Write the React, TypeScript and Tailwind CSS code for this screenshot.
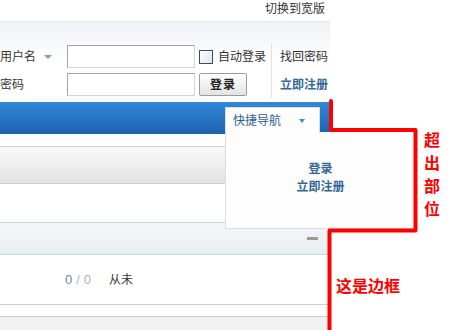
const font = "font-['Liberation_Sans','Noto_Sans_CJK_SC',sans-serif]";

function TopBar() {
  return (
    <div className="flex h-[22px] justify-end border-b border-[#e3e8ed] pr-[5px] leading-[19px]">
      切换到宽版
    </div>
  );
}

function LoginForm() {
  const input =
    "h-[23px] w-[128px] border border-[#d4d4d4] border-t-[#a3a3a3] border-l-[#a3a3a3] bg-white";
  return (
    <div className="flex h-[80px] bg-gradient-to-b from-[#eef2f6] via-white to-white pt-[23px]">
      <div className="grid grid-cols-[67px_128px_auto] grid-rows-[23px_23px] gap-y-[5px]">
        <div className="flex items-center gap-[8px]">
          <span>用户名</span>
          <span className="mt-[1px] h-0 w-0 border-x-[4px] border-t-[4px] border-x-transparent border-t-[#999]" />
        </div>
        <div className={input} />
        <label className="flex items-center pl-[4px] pr-[5px]">
          <span className="h-[14px] w-[14px] border border-[#2a4f78] bg-gradient-to-br from-white to-[#e4e4e4]" />
          <span className="ml-[5px]">自动登录</span>
        </label>
        <div className="flex items-center">密码</div>
        <div className={input} />
        <div className="pl-[4px]">
          <button
            type="button"
            className="h-[23px] w-[48px] rounded-[2px] border border-[#9c9c9c] bg-gradient-to-b from-white to-[#e3e3e3] text-[12px] font-bold tracking-[1px] text-[#222]"
          >
            登录
          </button>
        </div>
      </div>
      <div className="-mt-[2px] h-[55px] border-l border-[#e1e1e1]" />
      <div className="grid grid-rows-[23px_23px] gap-y-[5px] pl-[8px]">
        <div className="flex items-center pt-[1px]">找回密码</div>
        <div className="flex items-center font-bold text-[#336699]">立即注册</div>
      </div>
    </div>
  );
}

function QuickNav() {
  return (
    <>
      <div className="absolute left-[225px] top-[132px] flex h-[97px] w-[190px] flex-col items-center border-b border-l border-[#dcdcdc] bg-[#fdfdfd] pt-[28px] font-bold leading-[18px] text-[#336699]">
        <span>登录</span>
        <span>立即注册</span>
      </div>
      <div className="absolute left-[225px] top-[107px] flex h-[26px] w-[95px] items-center border-x border-t border-[#dcdcdc] bg-[#fdfdfd] pl-[7px] text-[#2f5f91]">
        <span>快捷导航</span>
        <span className="ml-[18px] mt-[1px] h-0 w-0 border-x-[3px] border-t-[4px] border-x-transparent border-t-[#3b8ee0]" />
      </div>
    </>
  );
}

function Annotations() {
  return (
    <>
      <svg className="pointer-events-none absolute inset-0" width="465" height="330" viewBox="0 0 465 330">
        <polyline
          points="331,101 331,130 415.5,130 415.5,230.5 329.5,230.5 329.5,332"
          fill="none"
          stroke="#ff0000"
          strokeWidth="4"
          strokeLinecap="round"
          strokeLinejoin="round"
        />
      </svg>
      <div className="absolute left-[424px] top-[129px] flex w-[16px] flex-col text-[16px] font-bold leading-[23px] text-[#ff0000]">
        <span>超</span>
        <span>出</span>
        <span>部</span>
        <span>位</span>
      </div>
      <div className="absolute left-[336px] top-[277px] text-[16px] font-bold leading-[20px] text-[#ff0000]">
        这是边框
      </div>
    </>
  );
}

export default function App() {
  return (
    <div className={`relative h-[330px] w-[465px] overflow-hidden bg-white text-[12px] text-[#333] ${font}`}>
      <div className="flex w-[330px] flex-col">
        <TopBar />
        <LoginForm />
        <div className="h-[32px] bg-gradient-to-b from-[#3189d8] to-[#1e62b0]" />
        <div className="h-[12px]" />
        <div className="h-[38px] border-y border-[#cccccc] bg-gradient-to-b from-[#f9f9f9] to-[#e3e3e3]" />
        <div className="h-[38px]" />
        <div className="flex h-[33px] items-center justify-end border-y border-[#c2d5e3] bg-gradient-to-b from-[#f4f7f9] to-[#e7edf1] pr-[12px]">
          <span className="h-[3px] w-[11px] bg-[#999]" />
        </div>
        <div className="flex h-[50px] items-center border-b border-[#cccccc] pl-[65px]">
          <span className="flex w-[44px] text-[13px] text-[#aab3c0]">
            <span className="text-[#6a86b4]">0</span>
            <span className="mx-[4px]">/</span>
            <span>0</span>
          </span>
          <span>从未</span>
        </div>
        <div className="h-[11px]" />
        <div className="h-[20px] border-t border-[#cccccc] bg-[#f1f1f1]" />
      </div>
      <QuickNav />
      <Annotations />
    </div>
  );
}
